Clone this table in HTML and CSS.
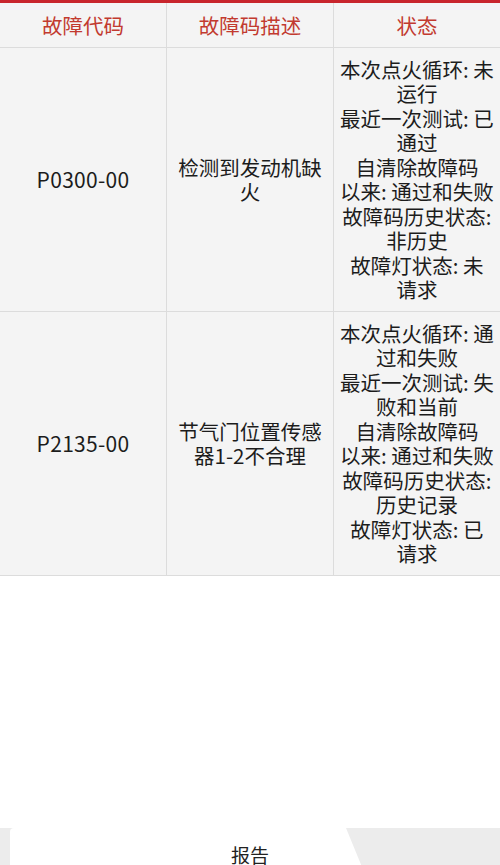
FILE: index.html
```html
<!DOCTYPE html>
<html lang="zh-CN">
  <head>
    <meta charset="UTF-8" />
    <meta name="viewport" content="width=device-width, initial-scale=1.0" />
    <title>故障码</title>
    <link rel="stylesheet" href="styles.css">
  </head>
  <body>
    <div class="page">
      <div class="top-bar"></div>

      <table class="dtc-table">
        <thead>
          <tr>
            <th>故障代码</th>
            <th>故障码描述</th>
            <th>状态</th>
          </tr>
        </thead>
        <tbody>
          <tr>
            <td class="code">P0300-00</td>
            <td>检测到发动机缺<br>火</td>
            <td class="status">
              本次点火循环: 未<br>运行<br>
              最近一次测试: 已<br>通过<br>
              自清除故障码<br>以来: 通过和失败<br>
              故障码历史状态:<br>非历史<br>
              故障灯状态: 未<br>请求
            </td>
          </tr>
          <tr>
            <td class="code">P2135-00</td>
            <td>节气门位置传感<br>器1-2不合理</td>
            <td class="status">
              本次点火循环: 通<br>过和失败<br>
              最近一次测试: 失<br>败和当前<br>
              自清除故障码<br>以来: 通过和失败<br>
              故障码历史状态:<br>历史记录<br>
              故障灯状态: 已<br>请求
            </td>
          </tr>
        </tbody>
      </table>

      <!-- barra inferior, cortada por la captura -->
      <footer class="footer">
        <div class="footer-strip"></div>
        <div class="report-card">报告</div>
      </footer>
    </div>
  </body>
</html>
```

FILE: styles.css
```css
* {
  margin: 0;
  padding: 0;
  box-sizing: border-box;
}

body {
  font-family: "Noto Sans CJK SC", "Noto Sans", sans-serif;
  color: #1c1c1c;
  background-color: #fff;
}

.page {
  display: flex;
  flex-direction: column;
  height: 865px;
  overflow: hidden;
}

.top-bar {
  height: 3px;
  background-color: #c8252c;
}

.dtc-table {
  width: 100%;
  table-layout: fixed;
  border-collapse: collapse;
  background-color: #f4f4f4;
}

.dtc-table th,
.dtc-table td {
  border-left: 1px solid #dcdcdc;
  border-bottom: 1px solid #dcdcdc;
  text-align: center;
  vertical-align: middle;
}

.dtc-table th:first-child,
.dtc-table td:first-child {
  border-left: none;
}

.dtc-table th {
  height: 44px;
  font-size: 20.5px;
  font-weight: normal;
  color: #c23a2f;
  padding-top: 1px;
}

.dtc-table td {
  font-size: 20.5px;
  line-height: 24.5px;
  padding: 9px 0;
}

.dtc-table td.code {
  font-size: 21px;
  letter-spacing: 0.3px;
}

.dtc-table td.status {
  white-space: nowrap;
}

.footer {
  margin-top: auto;
  height: 37px;
  background-color: #ececec;
  display: flex;
  flex-direction: column;
}

.footer-strip {
  height: 12px;
  width: 345px;
  background-color: #dadada;
  clip-path: polygon(0 0, 335px 0, 100% 100%, 0 100%);
}

.report-card {
  margin-left: 10px;
  width: 352px;
  flex: 1;
  background-color: #fff;
  border-top-left-radius: 4px;
  clip-path: polygon(0 0, 336px 0, 100% 100%, 0 100%);
  text-align: center;
  font-size: 19px;
  padding-top: 15px;
  padding-left: 128px;
  line-height: 24px;
  color: #222;
}
```
